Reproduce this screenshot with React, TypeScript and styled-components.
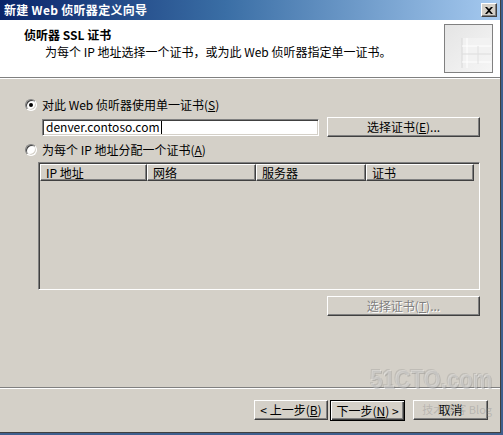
import React from "react";
import styled, { createGlobalStyle } from "styled-components";

const FONT = `"Noto Sans CJK SC", "Liberation Sans", sans-serif`;

const Global = createGlobalStyle`
  html, body { margin: 0; padding: 0; background: #4a6a98; }
  body { font-family: ${FONT}; font-size: 12px; color: #000; }
  * { box-sizing: border-box; }
`;

const Page = styled.div`
  width: 503px;
  height: 435px;
  background: #3f5f8e;
  position: relative;
  overflow: hidden;
`;

const Window = styled.div`
  width: 501px;
  height: 433px;
  background: #d4d0c8;
  border-right: 1px solid #404040;
  border-bottom: 1px solid #404040;
  display: flex;
  flex-direction: column;
`;

const TitleBar = styled.div`
  height: 20px;
  flex: none;
  background: linear-gradient(to right, #0a246a 0%, #3a6ea5 45%, #a6caf0 100%);
  display: flex;
  align-items: center;
  justify-content: space-between;
  padding: 0 3px 0 4px;
`;

const TitleText = styled.span`
  color: #fff;
  font-weight: bold;
  font-size: 12px;
  line-height: 14px;
  letter-spacing: 0.3px;
`;

const CloseButton = styled.div`
  width: 16px;
  height: 14px;
  background: #d4d0c8;
  border-top: 1px solid #fff;
  border-left: 1px solid #fff;
  border-right: 1px solid #404040;
  border-bottom: 1px solid #404040;
  box-shadow: inset -1px -1px 0 #808080;
  display: flex;
  align-items: center;
  justify-content: center;
`;

const Header = styled.div`
  height: 57px;
  flex: none;
  background: #fff;
  display: flex;
  align-items: flex-start;
  justify-content: space-between;
  padding: 4px 7px 0 24px;
`;

const HeaderText = styled.div`
  display: flex;
  flex-direction: column;
  padding-top: 4px;
`;

const HeaderTitle = styled.div`
  font-weight: bold;
  line-height: 14px;
`;

const HeaderSub = styled.div`
  line-height: 14px;
  margin-top: 3px;
  padding-left: 21px;
`;

const HeaderRule = styled.div`
  height: 2px;
  flex: none;
  border-top: 1px solid #808080;
  border-bottom: 1px solid #fff;
`;

const Body = styled.div`
  flex: 1;
  display: flex;
  flex-direction: column;
  padding: 18px 20px 0 25px;
`;

const RadioRow = styled.label<{ $top?: number }>`
  display: flex;
  align-items: center;
  height: 16px;
  gap: 5px;
  margin-top: ${(p) => p.$top ?? 0}px;
  line-height: 14px;
`;

const Radio = styled.span<{ $checked?: boolean }>`
  width: 12px;
  height: 12px;
  border-radius: 50%;
  flex: none;
  background: #fff;
  border: 1px solid;
  border-color: #808080 #fff #fff #808080;
  box-shadow: inset 1px 1px 0 #404040, inset -1px -1px 0 #d4d0c8;
  position: relative;
  &::after {
    content: "";
    display: ${(p) => (p.$checked ? "block" : "none")};
    position: absolute;
    width: 4px;
    height: 4px;
    border-radius: 50%;
    background: #000;
    left: 3px;
    top: 3px;
  }
`;

const U = styled.span`
  text-decoration: underline;
`;

const InputRow = styled.div`
  display: flex;
  align-items: center;
  justify-content: space-between;
  margin-top: 4px;
  padding-left: 17px;
`;

const TextInput = styled.div`
  width: 277px;
  height: 17px;
  background: #fff;
  border: 1px solid;
  border-color: #808080 #fff #fff #808080;
  box-shadow: inset 1px 1px 0 #404040, inset -1px -1px 0 #d4d0c8;
  display: flex;
  align-items: center;
  padding-left: 3px;
  line-height: 14px;
`;

const Caret = styled.span`
  display: inline-block;
  width: 1px;
  height: 13px;
  background: #000;
  margin-left: 1px;
`;

const Button = styled.div<{ $w: number; $disabled?: boolean; $default?: boolean }>`
  width: ${(p) => p.$w}px;
  height: ${(p) => (p.$default ? 21 : 20)}px;
  flex: none;
  background: #d4d0c8;
  border: 1px solid;
  border-color: ${(p) => (p.$default ? "#000" : "#fff #404040 #404040 #fff")};
  box-shadow: ${(p) =>
    p.$default
      ? "inset 1px 1px 0 #fff, inset -1px -1px 0 #404040, inset -2px -2px 0 #808080"
      : "inset -1px -1px 0 #808080"};
  display: flex;
  align-items: center;
  justify-content: center;
  line-height: 14px;
  color: ${(p) => (p.$disabled ? "#808080" : "#000")};
  text-shadow: ${(p) => (p.$disabled ? "1px 1px 0 #fff" : "none")};
`;

const ListBox = styled.div`
  margin: 4px 0 0 13px;
  height: 128px;
  border: 1px solid;
  border-color: #808080 #fff #fff #808080;
  box-shadow: inset 1px 1px 0 #404040, inset -1px -1px 0 #d4d0c8;
  padding: 1px;
  display: flex;
  flex-direction: column;
`;

const ListHeader = styled.div`
  display: grid;
  grid-template-columns: 107px 109px 110px 108px 1fr;
  height: 17px;
`;

const ColHead = styled.div`
  border: 1px solid;
  border-color: #fff #404040 #404040 #fff;
  box-shadow: inset -1px -1px 0 #808080;
  padding-left: 5px;
  display: flex;
  align-items: center;
  line-height: 14px;
`;

const RightRow = styled.div<{ $top: number }>`
  display: flex;
  justify-content: flex-end;
  margin-top: ${(p) => p.$top}px;
`;

const FooterRule = styled.div`
  height: 2px;
  flex: none;
  border-top: 1px solid #808080;
  border-bottom: 1px solid #fff;
`;

const Footer = styled.div`
  height: 43px;
  flex: none;
  display: flex;
  align-items: flex-start;
  justify-content: flex-end;
  padding: 11px 12px 0 0;
`;

const ButtonGroup = styled.div`
  display: flex;
  gap: 2px;
  margin-right: 8px;
`;

const Watermark = styled.div`
  position: absolute;
  left: 366px;
  top: 366px;
  width: 126px;
  display: flex;
  flex-direction: column;
  align-items: flex-end;
  pointer-events: none;
  font-family: "Liberation Sans", sans-serif;
`;

const WmBig = styled.div`
  font-size: 22px;
  font-weight: bold;
  line-height: 24px;
  transform: scaleY(1.15);
  transform-origin: top right;
  color: rgba(255, 255, 255, 0.35);
  text-shadow: 1px 1px 0 rgba(110, 110, 110, 0.3), -1px -1px 0 rgba(110, 110, 110, 0.2);
`;

const WmSmall = styled.div`
  font-family: ${FONT};
  font-size: 11px;
  line-height: 14px;
  color: rgba(140, 140, 140, 0.4);
  margin-top: 12px;
`;

const HeaderIcon = () => (
  <svg width="49" height="49" viewBox="0 0 49 49">
    <defs>
      <linearGradient id="ig" x1="0" y1="0" x2="1" y2="1">
        <stop offset="0" stopColor="#e4e4e4" />
        <stop offset="1" stopColor="#f6f6f6" />
      </linearGradient>
    </defs>
    <rect x="0.5" y="0.5" width="48" height="48" fill="url(#ig)" stroke="#808080" />
    <rect x="18" y="14" width="28" height="24" fill="#f2f2f2" opacity="0.8" />
    <line x1="18" y1="14" x2="18" y2="44" stroke="#d8d8d8" />
    <line x1="23" y1="14" x2="23" y2="44" stroke="#fff" />
    <line x1="18" y1="22" x2="47" y2="22" stroke="#fff" />
    <line x1="18" y1="30" x2="47" y2="30" stroke="#dcdcdc" />
    <line x1="18" y1="38" x2="47" y2="38" stroke="#fff" />
    <line x1="34" y1="22" x2="34" y2="40" stroke="#e0e0e0" />
  </svg>
);

export default function App() {
  return (
    <Page>
      <Global />
      <Window>
        <TitleBar>
          <TitleText>新建 Web 侦听器定义向导</TitleText>
          <CloseButton>
            <svg width="8" height="7" viewBox="0 0 8 7">
              <path d="M0 0 L2 0 L4 2 L6 0 L8 0 L5 3.5 L8 7 L6 7 L4 5 L2 7 L0 7 L3 3.5 Z" fill="#000" />
            </svg>
          </CloseButton>
        </TitleBar>
        <Header>
          <HeaderText>
            <HeaderTitle>侦听器 SSL 证书</HeaderTitle>
            <HeaderSub>为每个 IP 地址选择一个证书，或为此 Web 侦听器指定单一证书。</HeaderSub>
          </HeaderText>
          <HeaderIcon />
        </Header>
        <HeaderRule />
        <Body>
          <RadioRow>
            <Radio $checked />
            <span>
              对此 Web 侦听器使用单一证书(<U>S</U>)
            </span>
          </RadioRow>
          <InputRow>
            <TextInput>
              denver.contoso.com
              <Caret />
            </TextInput>
            <Button $w={153}>
              选择证书(<U>E</U>)...
            </Button>
          </InputRow>
          <RadioRow $top={5}>
            <Radio />
            <span>
              为每个 IP 地址分配一个证书(<U>A</U>)
            </span>
          </RadioRow>
          <ListBox>
            <ListHeader>
              <ColHead>IP 地址</ColHead>
              <ColHead>网络</ColHead>
              <ColHead>服务器</ColHead>
              <ColHead>证书</ColHead>
              <div />
            </ListHeader>
          </ListBox>
          <RightRow $top={6}>
            <Button $w={153} $disabled>
              选择证书(<U>T</U>)...
            </Button>
          </RightRow>
        </Body>
        <FooterRule />
        <Footer>
          <ButtonGroup>
            <Button $w={74}>
              &lt; 上一步(<U>B</U>)
            </Button>
            <Button $w={75} $default>
              下一步(<U>N</U>) &gt;
            </Button>
          </ButtonGroup>
          <Button $w={75}>取消</Button>
        </Footer>
      </Window>
      <Watermark>
        <WmBig>51CTO.com</WmBig>
        <WmSmall>技术博客 Blog</WmSmall>
      </Watermark>
    </Page>
  );
}
